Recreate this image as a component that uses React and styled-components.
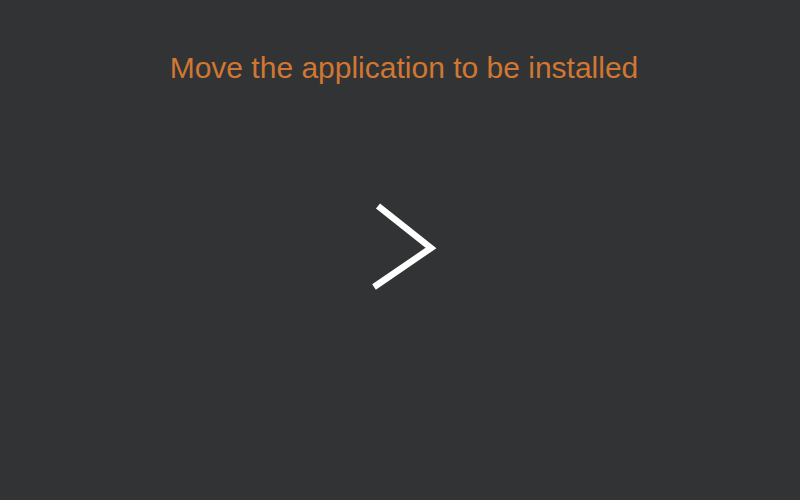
import styled, { createGlobalStyle } from "styled-components";

const GlobalStyle = createGlobalStyle`
  html, body {
    margin: 0;
    padding: 0;
    background: #323334;
  }
`;

export default function App() {
  return (
    <Screen>
      <GlobalStyle />
      <Title>Move the application to be installed</Title>
      <Arrow viewBox="0 0 80 100" width="80" height="100">
        <polyline
          points="18,9 71,51 14,90"
          fill="none"
          stroke="#ffffff"
          strokeWidth="6.5"
          strokeLinejoin="miter"
        />
      </Arrow>
    </Screen>
  );
}

const Screen = styled.div`
  display: flex;
  flex-direction: column;
  align-items: center;
  width: 800px;
  height: 500px;
  background: #323334;
  font-family: "Liberation Sans", Arial, sans-serif;
`;

const Title = styled.h1`
  margin: 51px 0 0;
  padding-left: 8px;
  font-size: 30px;
  line-height: 34px;
  font-weight: normal;
  color: #cf7733;
`;

const Arrow = styled.svg`
  display: block;
  margin-top: 112px;
`;
